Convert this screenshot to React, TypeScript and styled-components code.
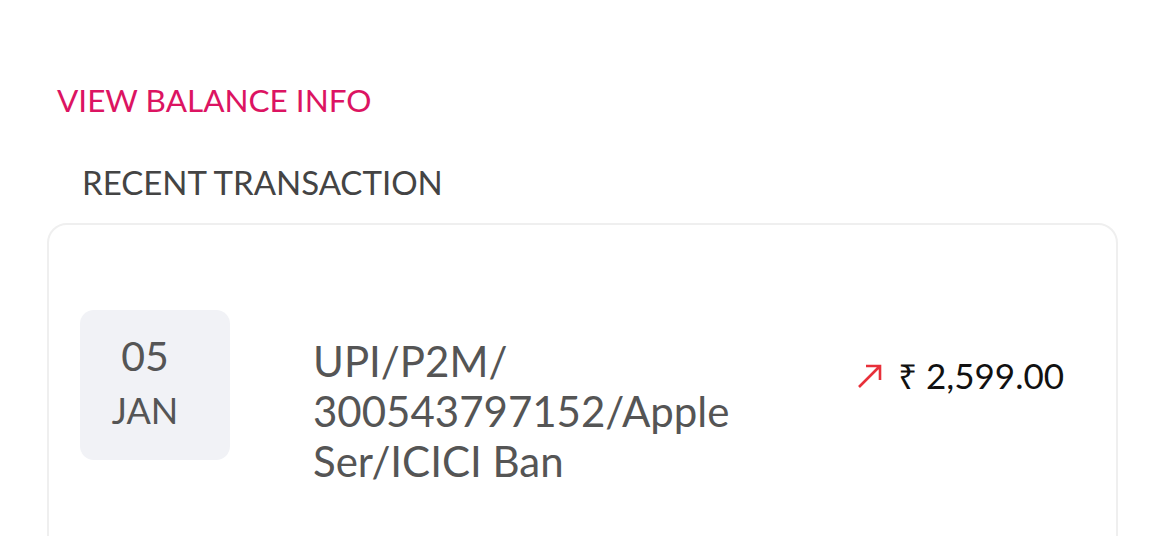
import React from 'react';
import styled, { createGlobalStyle } from 'styled-components';

const GlobalStyle = createGlobalStyle`
  body {
    margin: 0;
    background: #fff;
    font-family: Lato, "Noto Sans", sans-serif;
  }
`;

const Page = styled.div`
  padding: 80px 52px 0 47px;
  display: flex;
  flex-direction: column;
`;

const ViewLink = styled.a`
  margin-left: 10px;
  font-size: 31.5px;
  line-height: 40px;
  color: #dc1462;
  text-decoration: none;
  cursor: pointer;
`;

const SectionTitle = styled.h2`
  margin: 42px 0 0 35px;
  font-size: 33px;
  line-height: 40px;
  font-weight: 400;
  color: #444;
`;

const Card = styled.div`
  margin-top: 21px;
  border: 2px solid #efefef;
  border-radius: 20px;
  min-height: 400px;
  padding: 85px 52px 0 31px;
`;

const Row = styled.div`
  display: flex;
  align-items: flex-start;
`;

const DateBox = styled.div`
  width: 150px;
  height: 150px;
  box-sizing: border-box;
  padding: 21px 20px 0 0;
  flex-shrink: 0;
  border-radius: 14px;
  background: #f1f2f6;
  display: flex;
  flex-direction: column;
  align-items: center;
  gap: 7px;
  color: #555;
`;

const Day = styled.span`
  font-size: 41px;
  line-height: 50px;
`;

const Month = styled.span`
  font-size: 36px;
  line-height: 44px;
`;

const Description = styled.div`
  margin: 26px 0 0 83px;
  width: 450px;
  font-size: 42px;
  line-height: 50px;
  color: #555;
`;

const Amount = styled.div`
  margin: 45px 0 0 auto;
  display: flex;
  align-items: center;
  gap: 15px;
  font-size: 35px;
  line-height: 40px;
  color: #111;
`;

const Rupee = styled.span`
  font-family: "Noto Sans", "DejaVu Sans", sans-serif;
  font-size: 33px;
`;

const ArrowUp = () => (
  <svg width="26" height="26" viewBox="0 0 26 26" fill="none">
    <path d="M2 24 L23 3 M9 3 H23 V17" stroke="#e8303a" strokeWidth="2.6" />
  </svg>
);

export default function App() {
  return (
    <>
      <GlobalStyle />
      <Page>
        <ViewLink>VIEW BALANCE INFO</ViewLink>
        <SectionTitle>RECENT TRANSACTION</SectionTitle>
        <Card>
          <Row>
            <DateBox>
              <Day>05</Day>
              <Month>JAN</Month>
            </DateBox>
            <Description>
              UPI/P2M/<wbr />300543797152/Apple Ser/ICICI Ban
            </Description>
            <Amount>
              <ArrowUp />
              <span>
                <Rupee>₹</Rupee> 2,599.00
              </span>
            </Amount>
          </Row>
        </Card>
      </Page>
    </>
  );
}
